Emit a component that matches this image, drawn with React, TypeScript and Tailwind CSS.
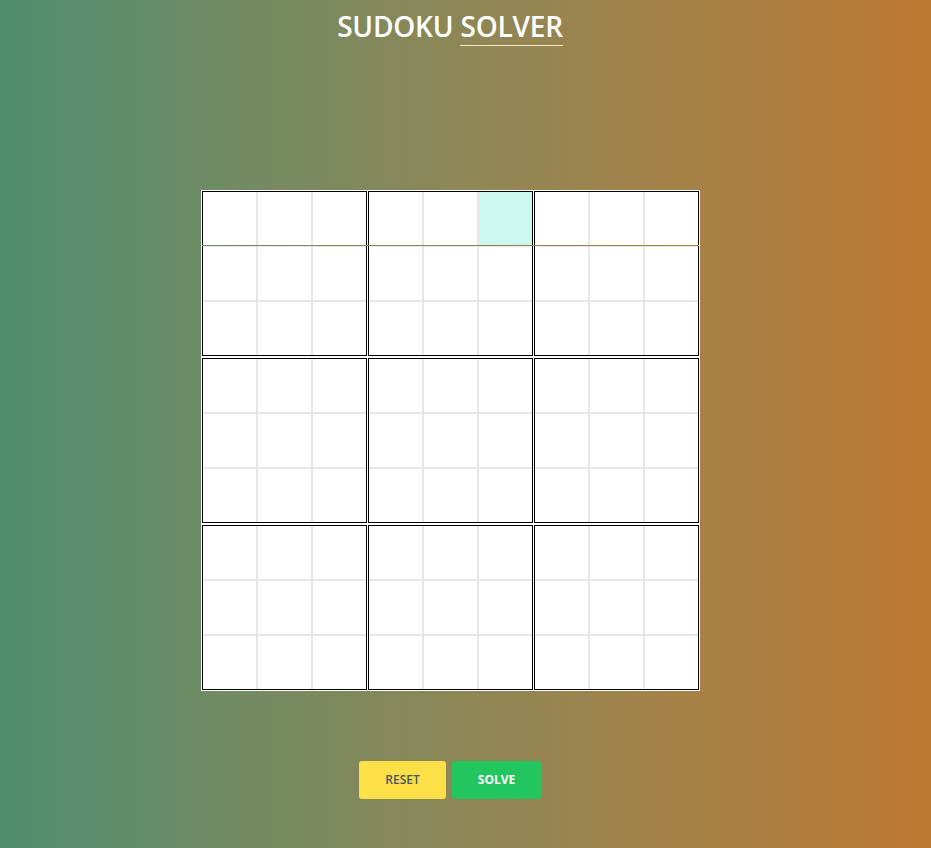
const FONT = { fontFamily: '"Open Sans", "Noto Sans", sans-serif' }

// highlighted cell: row 0, column 5
const HL_ROW = 0
const HL_COL = 5

function Cell({ hl }: { hl?: boolean }) {
  return <div className={hl ? 'h-[53px] w-[53px] bg-[#cdf8ef]' : 'h-[53px] w-[53px] bg-white'} />
}

function CellRow({ row, box }: { row: number; box: number }) {
  return (
    <div className="flex gap-[2px]">
      {[0, 1, 2].map((c) => (
        <Cell key={c} hl={row === HL_ROW && box * 3 + c === HL_COL} />
      ))}
    </div>
  )
}

function Box({ band, box }: { band: number; box: number }) {
  return (
    <div className="flex flex-col gap-[2px] border border-black bg-[#e5e7eb]">
      {[0, 1, 2].map((r) => (
        <CellRow key={r} row={band * 3 + r} box={box} />
      ))}
    </div>
  )
}

function FirstBand() {
  // the top row sits a pixel apart from the rest of its boxes
  return (
    <div className="flex flex-col">
      <div className="flex gap-px">
        {[0, 1, 2].map((b) => (
          <div key={b} className="border-x border-t border-black bg-[#e5e7eb]">
            <CellRow row={0} box={b} />
          </div>
        ))}
      </div>
      <div className="h-px bg-linear-to-r from-[#4c8e6f] to-[#be7a32] bg-fixed" />
      <div className="flex gap-px">
        {[0, 1, 2].map((b) => (
          <div key={b} className="flex flex-col gap-[2px] border-x border-b border-black bg-[#e5e7eb] pt-px">
            <CellRow row={1} box={b} />
            <CellRow row={2} box={b} />
          </div>
        ))}
      </div>
    </div>
  )
}

function Board() {
  return (
    <div className="flex flex-col gap-[2px] bg-white p-px">
      <FirstBand />
      {[1, 2].map((band) => (
        <div key={band} className="flex gap-px">
          {[0, 1, 2].map((b) => (
            <Box key={b} band={band} box={b} />
          ))}
        </div>
      ))}
    </div>
  )
}

export default function App() {
  return (
    <div
      className="flex min-h-screen flex-col items-center bg-linear-to-r from-[#4c8e6f] to-[#be7a32] bg-fixed pr-[31px]"
      style={FONT}
    >
      <h1 className="mt-[6px] text-[28px] leading-[40px] font-semibold tracking-[-0.2px] text-white">
        SUDOKU <span className="border-b border-[#f1e6bf]">SOLVER</span>
      </h1>

      <div className="mt-[144px]">
        <Board />
      </div>

      <div className="mt-[70px] flex gap-[6px]">
        <button className="h-[38px] w-[87px] rounded-[3px] bg-[#fde047] text-[12px] font-semibold text-[#4b5563]">
          RESET
        </button>
        <button className="h-[38px] w-[89px] rounded-[3px] bg-[#22c55e] text-[12px] font-bold text-white">
          SOLVE
        </button>
      </div>
    </div>
  )
}
